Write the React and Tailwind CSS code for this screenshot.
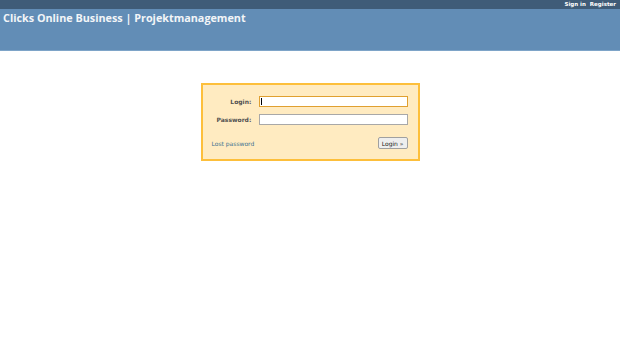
export default function App() {
  return (
    <div className="min-h-[343px] bg-white font-['DejaVu_Sans',sans-serif]">
      {/* top menu */}
      <div className="h-[9px] bg-[#3f5c78] flex justify-end items-center gap-[4px] pr-[4px] text-[5.5px] font-bold text-white">
        <span>Sign in</span>
        <span>Register</span>
      </div>
      {/* header */}
      <div className="h-[42px] bg-[#628db6] border-b border-[#7ea4c8] pl-[3px] pt-[1px]">
        <h1 className="text-[10.8px] font-bold text-[#f2f5f8] font-['Open_Sans',sans-serif] leading-[16px]">
          Clicks Online Business | Projektmanagement
        </h1>
      </div>
      {/* login box */}
      <div className="flex justify-center pt-[32px]">
        <div className="w-[219px] h-[78px] bg-[#ffebc1] border-2 border-[#fdbf3b] pt-[10px] px-[10px] text-[6px] font-['DejaVu_Sans',sans-serif] text-[#505050]">
          <div className="flex items-center h-[12px]">
            <label className="w-[47px] text-right font-bold pr-[8px]">Login:</label>
            <div className="w-[149px] h-[11px] bg-white border border-[#e0a030] flex items-center pl-[1px]">
              <div className="w-px h-[7px] bg-black" />
            </div>
          </div>
          <div className="flex items-center h-[12px] mt-[6px]">
            <label className="w-[47px] text-right font-bold pr-[8px]">Password:</label>
            <div className="w-[149px] h-[11px] bg-white border border-[#a8a8a8]" />
          </div>
          <div className="flex items-center justify-between mt-[12px]">
            <span className="text-[#3a7290] -ml-[1px]">Lost password</span>
            <div className="h-[12px] px-[3px] bg-[#eeeeee] border border-[#a0a0a0] rounded-[2px] flex items-center text-[#222]">
              Login »
            </div>
          </div>
        </div>
      </div>
    </div>
  );
}
